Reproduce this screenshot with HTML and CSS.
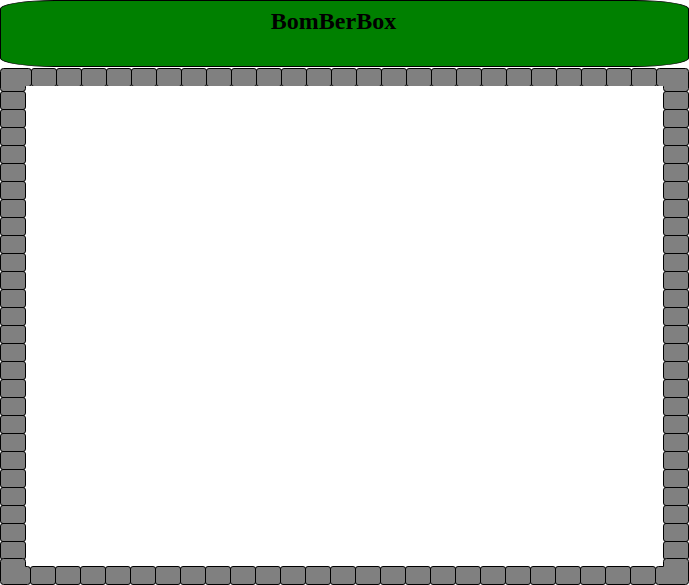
FILE: index.html
```html
<!DOCTYPE html>
<html>
<head>
<meta charset="utf-8">
<title>BomBerBox</title>
<link rel="stylesheet" href="styles.css">
</head>
<body>
<header class="banner"><h1 class="title">BomBerBox</h1></header>
<main class="wall">
  <div class="row row-top">
    <svg class="corner corner-tl" width="32" height="24" viewBox="0 0 32 24"><path d="M3.5,0.5 H28.5 Q31.5,0.5 31.5,3.5 V15.5 Q31.5,18.5 28.5,18.5 H25.5 V20.5 Q25.5,23.5 22.5,23.5 H3.5 Q0.5,23.5 0.5,20.5 V3.5 Q0.5,0.5 3.5,0.5 Z"/></svg>
    <div class="brick"></div><div class="brick"></div><div class="brick"></div><div class="brick"></div><div class="brick"></div>
    <div class="brick"></div><div class="brick"></div><div class="brick"></div><div class="brick"></div><div class="brick"></div>
    <div class="brick"></div><div class="brick"></div><div class="brick"></div><div class="brick"></div><div class="brick"></div>
    <div class="brick"></div><div class="brick"></div><div class="brick"></div><div class="brick"></div><div class="brick"></div>
    <div class="brick"></div><div class="brick"></div><div class="brick"></div><div class="brick"></div><div class="brick"></div>
    <svg class="corner corner-tr" width="33" height="24" viewBox="0 0 33 24"><path d="M3.5,0.5 H29.5 Q32.5,0.5 32.5,3.5 V20.5 Q32.5,23.5 29.5,23.5 H10.5 Q7.5,23.5 7.5,20.5 V18.5 H3.5 Q0.5,18.5 0.5,15.5 V3.5 Q0.5,0.5 3.5,0.5 Z"/></svg>
  </div>
  <div class="row-mid">
    <div class="col">
      <div class="vbrick"></div><div class="vbrick"></div><div class="vbrick"></div><div class="vbrick"></div><div class="vbrick"></div>
      <div class="vbrick"></div><div class="vbrick"></div><div class="vbrick"></div><div class="vbrick"></div><div class="vbrick"></div>
      <div class="vbrick"></div><div class="vbrick"></div><div class="vbrick"></div><div class="vbrick"></div><div class="vbrick"></div>
      <div class="vbrick"></div><div class="vbrick"></div><div class="vbrick"></div><div class="vbrick"></div><div class="vbrick"></div>
      <div class="vbrick"></div><div class="vbrick"></div><div class="vbrick"></div><div class="vbrick"></div><div class="vbrick"></div>
      <div class="vbrick"></div>
    </div>
    <div class="field"></div>
    <div class="col">
      <div class="vbrick"></div><div class="vbrick"></div><div class="vbrick"></div><div class="vbrick"></div><div class="vbrick"></div>
      <div class="vbrick"></div><div class="vbrick"></div><div class="vbrick"></div><div class="vbrick"></div><div class="vbrick"></div>
      <div class="vbrick"></div><div class="vbrick"></div><div class="vbrick"></div><div class="vbrick"></div><div class="vbrick"></div>
      <div class="vbrick"></div><div class="vbrick"></div><div class="vbrick"></div><div class="vbrick"></div><div class="vbrick"></div>
      <div class="vbrick"></div><div class="vbrick"></div><div class="vbrick"></div><div class="vbrick"></div><div class="vbrick"></div>
      <div class="vbrick"></div>
    </div>
  </div>
  <div class="row row-bottom">
    <svg class="corner corner-bl" width="31" height="27" viewBox="0 0 31 27"><path d="M3.5,0.5 H22.5 Q25.5,0.5 25.5,3.5 V8.5 H27.5 Q30.5,8.5 30.5,11.5 V23.5 Q30.5,26.5 27.5,26.5 H3.5 Q0.5,26.5 0.5,23.5 V3.5 Q0.5,0.5 3.5,0.5 Z"/></svg>
    <div class="brick"></div><div class="brick"></div><div class="brick"></div><div class="brick"></div><div class="brick"></div>
    <div class="brick"></div><div class="brick"></div><div class="brick"></div><div class="brick"></div><div class="brick"></div>
    <div class="brick"></div><div class="brick"></div><div class="brick"></div><div class="brick"></div><div class="brick"></div>
    <div class="brick"></div><div class="brick"></div><div class="brick"></div><div class="brick"></div><div class="brick"></div>
    <div class="brick"></div><div class="brick"></div><div class="brick"></div><div class="brick"></div><div class="brick"></div>
    <svg class="corner corner-br" width="34" height="27" viewBox="0 0 34 27"><path d="M11.5,0.5 H30.5 Q33.5,0.5 33.5,3.5 V23.5 Q33.5,26.5 30.5,26.5 H3.5 Q0.5,26.5 0.5,23.5 V11.5 Q0.5,8.5 3.5,8.5 H8.5 V3.5 Q8.5,0.5 11.5,0.5 Z"/></svg>
  </div>
</main>
</body>
</html>
```

FILE: styles.css
```css
html, body {
  margin: 0;
  padding: 0;
  background: #ffffff;
}

body {
  width: 689px;
  height: 585px;
  overflow: hidden;
}

.banner {
  box-sizing: border-box;
  width: 689px;
  height: 67px;
  margin: 0 0 1px 0;
  padding: 6px 22px 0 0;
  background: #008000;
  border: 1px solid #000000;
  border-radius: 55px / 9px;
  text-align: center;
}

.title {
  margin: 0;
  font-family: "Liberation Serif", "Times New Roman", serif;
  font-weight: bold;
  font-size: 24px;
  line-height: 28px;
  color: #000000;
}

.wall {
  display: flex;
  flex-direction: column;
  width: 689px;
  height: 517px;
}

.row {
  display: flex;
  height: 19px;
  flex: none;
}

.row-top {
  align-items: flex-start;
}

.row-bottom {
  align-items: flex-end;
}

.brick {
  box-sizing: border-box;
  flex: none;
  width: 26px;
  height: 19px;
  margin-left: -1px;
  background: #808080;
  border: 1px solid #000000;
  border-radius: 3px;
}

.corner {
  flex: none;
  display: block;
  overflow: visible;
}

.corner path {
  fill: #808080;
  stroke: #000000;
  stroke-width: 1;
}

.corner-tl {
  margin-bottom: -5px;
}

.corner-tr {
  margin-left: -1px;
  margin-bottom: -5px;
}

.corner-bl {
  margin-top: -8px;
}

.corner-br {
  margin-left: -1px;
  margin-top: -8px;
}

.row-mid {
  display: flex;
  height: 481px;
  margin: -1px 0;
  flex: none;
}

.col {
  display: flex;
  flex-direction: column;
  width: 26px;
  padding-top: 6px;
  box-sizing: border-box;
  flex: none;
}

.vbrick {
  box-sizing: border-box;
  flex: none;
  width: 26px;
  height: 19px;
  margin-top: -1px;
  background: #808080;
  border: 1px solid #000000;
  border-radius: 3px;
}

.field {
  flex: 1;
  background: #ffffff;
}
```
